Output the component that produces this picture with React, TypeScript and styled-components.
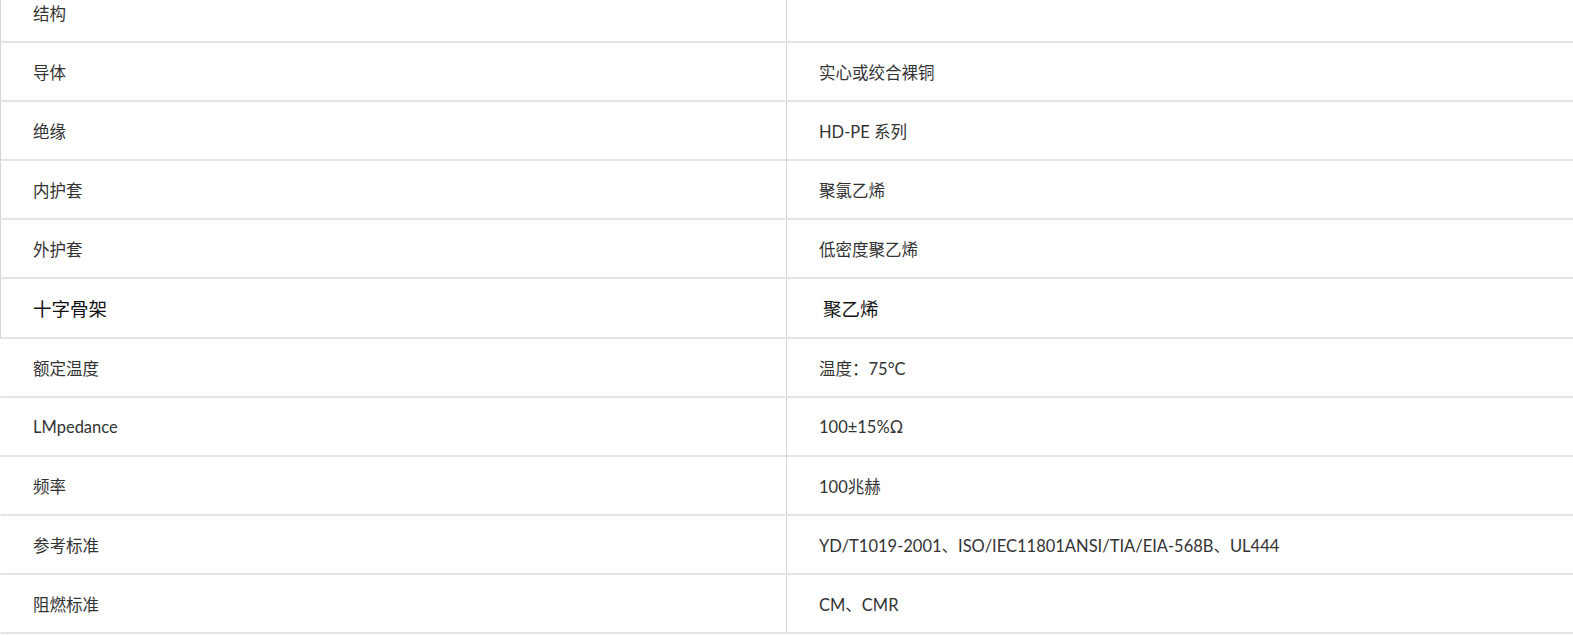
import styled, { createGlobalStyle } from "styled-components";

const GlobalStyle = createGlobalStyle`
  html, body {
    margin: 0;
    padding: 0;
    background: #ffffff;
    overflow: hidden;
  }
`;

const Table = styled.div`
  margin-top: -16px;
  width: 100%;
  font-family: Lato, "Noto Sans CJK SC", sans-serif;
`;

const Row = styled.div<{ $framed?: boolean; $big?: boolean }>`
  display: grid;
  grid-template-columns: 785px 1fr;
  height: ${({ $big }) => ($big ? "58px" : "57.05px")};
  border-bottom: 2px solid #e4e4e4;
  border-left: 1px solid ${({ $framed }) => ($framed ? "#d4d4d4" : "transparent")};
`;

const Cell = styled.div<{ $big?: boolean; $right?: boolean }>`
  display: flex;
  align-items: center;
  padding-left: ${({ $right, $big }) => ($right && $big ? "36px" : "32px")};
  border-left: ${({ $right }) => ($right ? "1px solid #d4d4d4" : "none")};
  font-size: ${({ $big }) => ($big ? "18.5px" : "16.5px")};
  color: ${({ $big }) => ($big ? "#111111" : "#333333")};
  font-family: ${({ $big }) =>
    $big ? '"Noto Sans CJK SC", sans-serif' : 'Lato, "Noto Sans CJK SC", sans-serif'};
  white-space: nowrap;
`;

const rows: { name: string; value: string; big?: boolean; framed?: boolean }[] = [
  { name: "结构", value: "", framed: true },
  { name: "导体", value: "实心或绞合裸铜", framed: true },
  { name: "绝缘", value: "HD-PE 系列", framed: true },
  { name: "内护套", value: "聚氯乙烯", framed: true },
  { name: "外护套", value: "低密度聚乙烯", framed: true },
  { name: "十字骨架", value: "聚乙烯", big: true, framed: true },
  { name: "额定温度", value: "温度：75°C" },
  { name: "LMpedance", value: "100±15%Ω" },
  { name: "频率", value: "100兆赫" },
  { name: "参考标准", value: "YD/T1019-2001、ISO/IEC11801ANSI/TIA/EIA-568B、UL444" },
  { name: "阻燃标准", value: "CM、CMR" },
];

export default function App() {
  return (
    <>
      <GlobalStyle />
      <Table>
        {rows.map((r) => (
          <Row key={r.name} $framed={r.framed} $big={r.big}>
            <Cell $big={r.big}>{r.name}</Cell>
            <Cell $big={r.big} $right>
              {r.value}
            </Cell>
          </Row>
        ))}
      </Table>
    </>
  );
}
